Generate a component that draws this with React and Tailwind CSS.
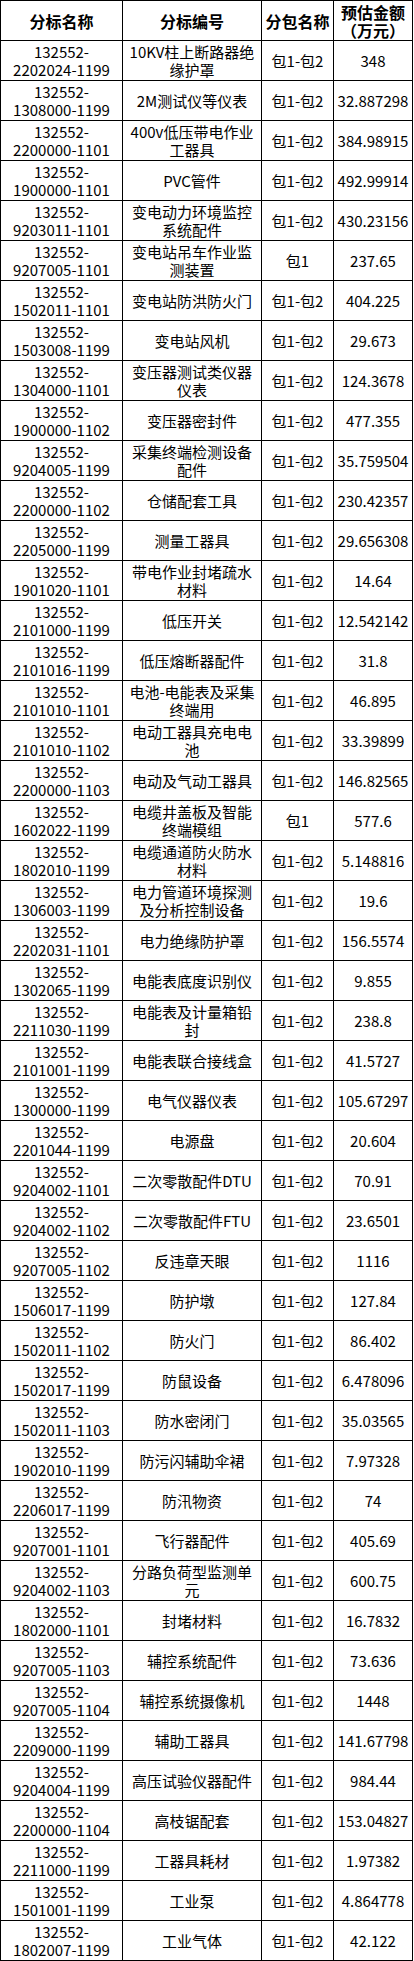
const ROWS = [
  ['2202024-1199', '10KV柱上断路器绝/缘护罩', '包1-包2', '348'],
  ['1308000-1199', '2M测试仪等仪表', '包1-包2', '32.887298'],
  ['2200000-1101', '400v低压带电作业/工器具', '包1-包2', '384.98915'],
  ['1900000-1101', 'PVC管件', '包1-包2', '492.99914'],
  ['9203011-1101', '变电动力环境监控/系统配件', '包1-包2', '430.23156'],
  ['9207005-1101', '变电站吊车作业监/测装置', '包1', '237.65'],
  ['1502011-1101', '变电站防洪防火门', '包1-包2', '404.225'],
  ['1503008-1199', '变电站风机', '包1-包2', '29.673'],
  ['1304000-1101', '变压器测试类仪器/仪表', '包1-包2', '124.3678'],
  ['1900000-1102', '变压器密封件', '包1-包2', '477.355'],
  ['9204005-1199', '采集终端检测设备/配件', '包1-包2', '35.759504'],
  ['2200000-1102', '仓储配套工具', '包1-包2', '230.42357'],
  ['2205000-1199', '测量工器具', '包1-包2', '29.656308'],
  ['1901020-1101', '带电作业封堵疏水/材料', '包1-包2', '14.64'],
  ['2101000-1199', '低压开关', '包1-包2', '12.542142'],
  ['2101016-1199', '低压熔断器配件', '包1-包2', '31.8'],
  ['2101010-1101', '电池-电能表及采集/终端用', '包1-包2', '46.895'],
  ['2101010-1102', '电动工器具充电电/池', '包1-包2', '33.39899'],
  ['2200000-1103', '电动及气动工器具', '包1-包2', '146.82565'],
  ['1602022-1199', '电缆井盖板及智能/终端模组', '包1', '577.6'],
  ['1802010-1199', '电缆通道防火防水/材料', '包1-包2', '5.148816'],
  ['1306003-1199', '电力管道环境探测/及分析控制设备', '包1-包2', '19.6'],
  ['2202031-1101', '电力绝缘防护罩', '包1-包2', '156.5574'],
  ['1302065-1199', '电能表底度识别仪', '包1-包2', '9.855'],
  ['2211030-1199', '电能表及计量箱铅/封', '包1-包2', '238.8'],
  ['2101001-1199', '电能表联合接线盒', '包1-包2', '41.5727'],
  ['1300000-1199', '电气仪器仪表', '包1-包2', '105.67297'],
  ['2201044-1199', '电源盘', '包1-包2', '20.604'],
  ['9204002-1101', '二次零散配件DTU', '包1-包2', '70.91'],
  ['9204002-1102', '二次零散配件FTU', '包1-包2', '23.6501'],
  ['9207005-1102', '反违章天眼', '包1-包2', '1116'],
  ['1506017-1199', '防护墩', '包1-包2', '127.84'],
  ['1502011-1102', '防火门', '包1-包2', '86.402'],
  ['1502017-1199', '防鼠设备', '包1-包2', '6.478096'],
  ['1502011-1103', '防水密闭门', '包1-包2', '35.03565'],
  ['1902010-1199', '防污闪辅助伞裙', '包1-包2', '7.97328'],
  ['2206017-1199', '防汛物资', '包1-包2', '74'],
  ['9207001-1101', '飞行器配件', '包1-包2', '405.69'],
  ['9204002-1103', '分路负荷型监测单/元', '包1-包2', '600.75'],
  ['1802000-1101', '封堵材料', '包1-包2', '16.7832'],
  ['9207005-1103', '辅控系统配件', '包1-包2', '73.636'],
  ['9207005-1104', '辅控系统摄像机', '包1-包2', '1448'],
  ['2209000-1199', '辅助工器具', '包1-包2', '141.67798'],
  ['9204004-1199', '高压试验仪器配件', '包1-包2', '984.44'],
  ['2200000-1104', '高枝锯配套', '包1-包2', '153.04827'],
  ['2211000-1199', '工器具耗材', '包1-包2', '1.97382'],
  ['1501001-1199', '工业泵', '包1-包2', '4.864778'],
  ['1802007-1199', '工业气体', '包1-包2', '42.122'],
];

const rowCls = 'grid grid-cols-[122px_139px_72px_79px]';
const cellCls =
  'h-[40px] border-r border-b border-black flex flex-col items-center justify-center text-center leading-[18px] whitespace-nowrap';

function Lines({ text }) {
  return text.split('/').map((line, i) => <span key={i}>{line}</span>);
}

export default function App() {
  return (
    <div className="bg-white w-[414px] min-h-[1961px] font-['Noto_Sans_CJK_SC',sans-serif] text-[15px] text-black">
      <div className="w-[413px] border-l border-t border-black">
        <div className={`${rowCls} font-bold text-[16px]`}>
          <div className={cellCls}>分标名称</div>
          <div className={cellCls}>分标编号</div>
          <div className={cellCls}>分包名称</div>
          <div className={cellCls}>
            <span>预估金额</span>
            <span>（万元）</span>
          </div>
        </div>
        {ROWS.map(([code, name, pkg, amount]) => (
          <div key={code + name} className={rowCls}>
            <div className={cellCls}>
              <span>132552-</span>
              <span>{code}</span>
            </div>
            <div className={`${cellCls} px-1`}>
              <Lines text={name} />
            </div>
            <div className={cellCls}>{pkg}</div>
            <div className={cellCls}>{amount}</div>
          </div>
        ))}
      </div>
    </div>
  );
}
